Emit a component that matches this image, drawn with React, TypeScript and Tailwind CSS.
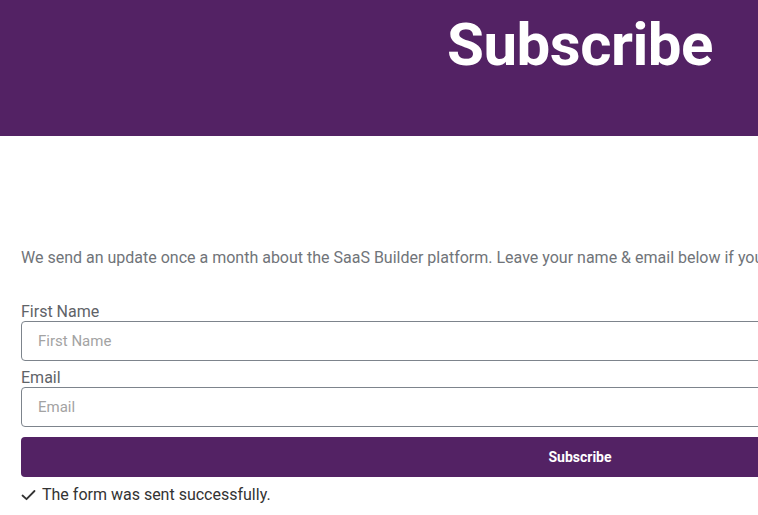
import React from "react";

export default function App() {
  return (
    <div className="w-[758px] h-[515px] overflow-hidden bg-white" style={{ fontFamily: "Roboto, 'Liberation Sans', sans-serif" }}>
      <div className="w-[1160px]">
        <header className="h-[136px] bg-[#532264] flex justify-center pt-[15px]">
          <h1 className="text-[60px] leading-none font-bold text-white tracking-[-0.5px]">Subscribe</h1>
        </header>
        <div className="px-[21px] pt-[110px]">
          <p className="text-[16px] leading-[24px] text-[#707479] whitespace-nowrap overflow-hidden">
            We send an update once a month about the SaaS Builder platform. Leave your name &amp; email below if you want to get notified.
          </p>
          <form className="mt-[33px] flex flex-col" onSubmit={(e) => e.preventDefault()}>
            <label className="text-[16px] leading-[18px] text-[#5f6368]">First Name</label>
            <input
              className="h-[40px] border border-[#7d848c] rounded-[4px] px-[16px] text-[15px] placeholder:text-[#a3a3a3] outline-none"
              placeholder="First Name"
            />
            <label className="mt-[8px] text-[16px] leading-[18px] text-[#5f6368]">Email</label>
            <input
              className="h-[40px] border border-[#7d848c] rounded-[4px] px-[16px] text-[15px] placeholder:text-[#a3a3a3] outline-none"
              placeholder="Email"
            />
            <button className="mt-[10px] h-[40px] rounded-[4px] bg-[#532264] text-white text-[14px] font-bold">
              Subscribe
            </button>
            <div className="mt-[6px] flex items-center gap-[6px] text-[16px] leading-[24px] text-[#333]">
              <svg width="15" height="12" viewBox="0 0 15 12" fill="none">
                <path d="M1.5 6.5 L5.5 10.2 L13.5 2" stroke="#333" strokeWidth="1.8" strokeLinecap="round" strokeLinejoin="round" />
              </svg>
              <span>The form was sent successfully.</span>
            </div>
          </form>
        </div>
      </div>
    </div>
  );
}
